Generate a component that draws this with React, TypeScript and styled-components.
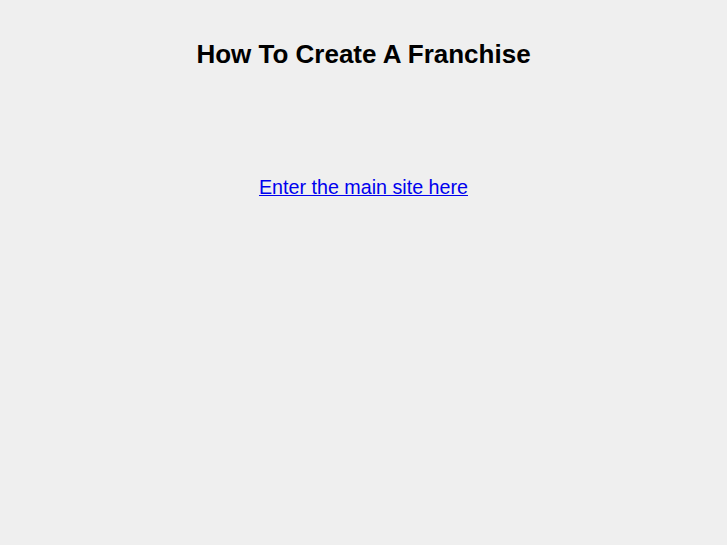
import React from "react";
import styled, { createGlobalStyle } from "styled-components";

const GlobalStyle = createGlobalStyle`
  html, body {
    margin: 0;
    padding: 0;
    background: #efefef;
  }
  body {
    font-family: "Liberation Sans", Arial, sans-serif;
  }
`;

const Page = styled.div`
  box-sizing: border-box;
  min-height: 545px;
  display: flex;
  flex-direction: column;
  align-items: center;
  padding-top: 38px;
`;

const Title = styled.h1`
  margin: 0;
  font-size: 26px;
  font-weight: bold;
  color: #000;
  line-height: 32px;
`;

const EnterLink = styled.a`
  margin-top: 105px;
  font-size: 19.7px;
  line-height: 24px;
  color: #0000ee;
  text-decoration: underline;
`;

function App() {
  return (
    <>
      <GlobalStyle />
      <Page>
        <Title>How To Create A Franchise</Title>
        <EnterLink href="#">Enter the main site here</EnterLink>
      </Page>
    </>
  );
}

export default App;
